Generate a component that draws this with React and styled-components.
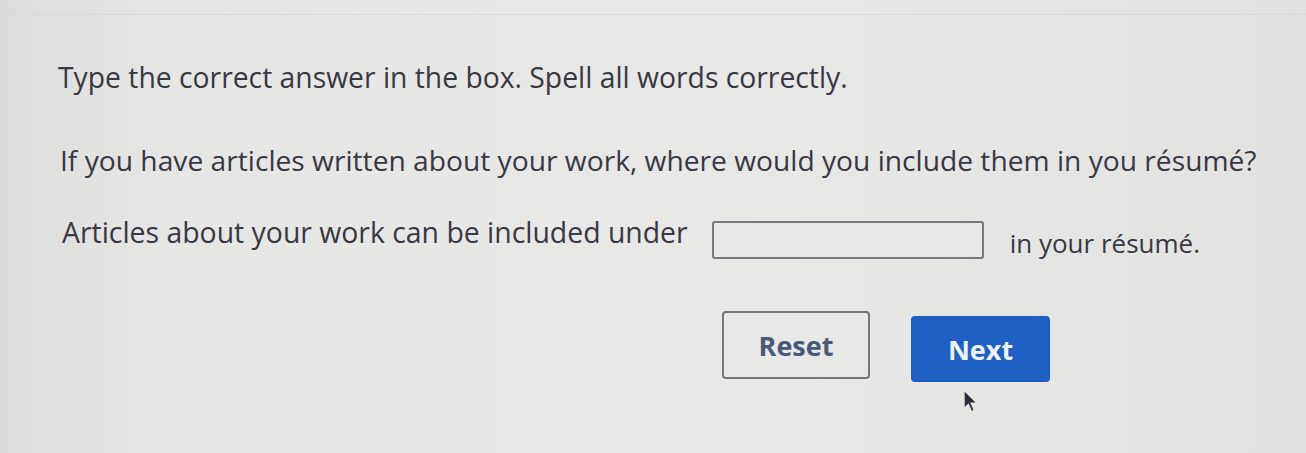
import React from "react";
import styled, { createGlobalStyle } from "styled-components";

const GlobalStyle = createGlobalStyle`
  html, body {
    margin: 0;
    padding: 0;
    background: #e5e5e3;
  }
  body {
    font-family: "Open Sans", "Liberation Sans", sans-serif;
    color: #383844;
  }
`;

const Page = styled.div`
  position: relative;
  width: 1306px;
  height: 453px;
  overflow: hidden;
  background: linear-gradient(90deg, #dcdcda 0%, #e6e6e4 12%, #e8e8e6 60%, #e2e2e0 100%);
  box-sizing: border-box;
  padding: 58px 0 0 58px;
`;

const TopEdge = styled.div`
  position: absolute;
  left: 0;
  right: 0;
  top: 14px;
  height: 1px;
  background: #d9d9d7;
`;

const Line = styled.p`
  margin: 0 0 ${(p) => p.$gap}px ${(p) => p.$indent}px;
  font-size: ${(p) => p.$size}px;
  font-weight: 500;
  line-height: 38px;
  white-space: nowrap;
`;

const Row = styled.div`
  display: flex;
  align-items: flex-start;
  margin-left: 4px;
  font-size: 28.4px;
  font-weight: 500;
  line-height: 38px;
  white-space: nowrap;
`;

const AnswerBox = styled.input`
  width: 272px;
  height: 38px;
  margin: 8px 26px 0 24px;
  box-sizing: border-box;
  border: 2px solid #7a7a7e;
  border-radius: 3px;
  background: #e9e9e7;
  outline: none;
`;

const Trailing = styled.span`
  font-size: 26px;
  margin-top: 11px;
`;

const Buttons = styled.div`
  display: flex;
  align-items: flex-start;
  gap: 41px;
  margin: 49px 0 0 664px;
`;

const Button = styled.button`
  width: ${(p) => p.$w}px;
  height: ${(p) => p.$h}px;
  margin-top: ${(p) => p.$top}px;
  box-sizing: border-box;
  border-radius: 4px;
  font-family: "Open Sans", "Liberation Sans", sans-serif;
  font-weight: 700;
  font-size: 27px;
  border: 2px solid ${(p) => (p.$primary ? "#1c5ec1" : "#77777a")};
  background: ${(p) => (p.$primary ? "#1f60c4" : "#e8e8e6")};
  color: ${(p) => (p.$primary ? "#eef2fb" : "#4a5878")};
  padding: 0;
`;

const Pointer = styled.svg`
  position: absolute;
  left: 962px;
  top: 389px;
`;

export default function App() {
  return (
    <>
      <GlobalStyle />
      <Page>
        <TopEdge />
        <Line $size={28.3} $gap={45} $indent={0}>
          Type the correct answer in the box. Spell all words correctly.
        </Line>
        <Line $size={28.2} $gap={34} $indent={2}>
          If you have articles written about your work, where would you include them in you résumé?
        </Line>
        <Row>
          <span>Articles about your work can be included under</span>
          <AnswerBox type="text" aria-label="answer" />
          <Trailing>in your résumé.</Trailing>
        </Row>
        <Buttons>
          <Button $w={148} $h={68} $top={0}>Reset</Button>
          <Button $primary $w={139} $h={66} $top={5}>Next</Button>
        </Buttons>
        <Pointer width="17" height="26" viewBox="0 0 16 24">
          <path d="M2 1 L2 18 L6 14 L9 21 L11.5 20 L8.5 13 L14 13 Z" fill="#2c2c38" stroke="#e6e6e4" strokeWidth="1" />
        </Pointer>
      </Page>
    </>
  );
}
